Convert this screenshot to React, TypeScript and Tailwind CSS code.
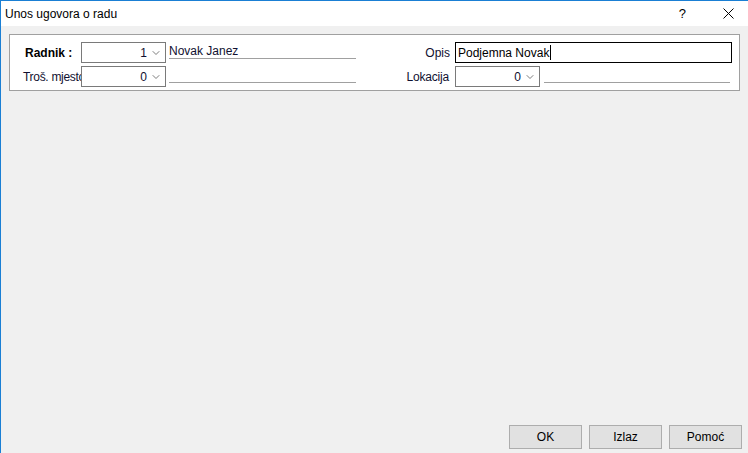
import { ChevronDown } from 'lucide-react'

const font = { fontFamily: '"Liberation Sans", Arial, sans-serif' }

function Combo({ value }: { value: string }) {
  return (
    <div className="relative z-10 flex h-[21px] w-[85px] shrink-0 items-center justify-end border border-[#7a7a7a] bg-white pr-[3px] text-[12px] text-[#101030]">
      <span className="mr-[3px]">{value}</span>
      <ChevronDown size={12} strokeWidth={1.6} className="text-[#5a5a5a]" />
    </div>
  )
}

function LineField({ text, width }: { text?: string; width: string }) {
  return (
    <div className={`h-[17px] ${width} shrink-0 self-start border-b border-[#a0a0a0] pt-[2px] text-[12px] leading-[14px] text-[#101030]`}>
      {text}
    </div>
  )
}

function DialogButton({ label }: { label: string }) {
  return (
    <button className="h-[24px] w-[73px] border border-[#adadad] bg-[#e1e1e1] text-[12px] text-black">
      {label}
    </button>
  )
}

export default function App() {
  return (
    <div className="flex h-[453px] w-[748px] flex-col overflow-hidden border-l border-[#1a7fd4] bg-[#f0f0f0]" style={font}>
      {/* Title bar */}
      <div className="flex h-[26px] shrink-0 items-center border-t border-[#1a7fd4] bg-white">
        <span className="ml-[4px] text-[12px] text-black">Unos ugovora o radu</span>
        <span className="ml-auto mr-[37px] text-[13px] text-black">?</span>
        <svg width="11" height="11" viewBox="0 0 11 11" className="mr-[14px]">
          <path d="M0.5 0.5 L10.5 10.5 M10.5 0.5 L0.5 10.5" stroke="#000" strokeWidth="1" />
        </svg>
      </div>

      {/* Header group */}
      <div className="ml-[8px] mt-[8px] flex w-[731px] flex-col gap-[3px] border border-[#a0a0a0] bg-white pb-[3px] pt-[7px]">
        <div className="flex h-[21px] items-center">
          <div className="ml-[15px] w-[56px] shrink-0 text-[12px] font-bold text-black">Radnik :</div>
          <Combo value="1" />
          <div className="ml-[3px]" />
          <LineField text="Novak Janez" width="w-[187px]" />
          <div className="w-[94px] shrink-0 text-right text-[12px] text-[#101030]">Opis</div>
          <div className="ml-[5px] flex h-[21px] w-[277px] items-center border border-black bg-white pl-[2px] text-[12px] text-black">
            Podjemna Novak<span className="ml-[1px] inline-block h-[15px] w-[1px] bg-black" />
          </div>
        </div>
        <div className="flex h-[21px] items-center">
          <div className="ml-[13px] w-[58px] shrink-0 whitespace-nowrap text-[12px] tracking-[-0.3px] text-[#101030]">Troš. mjesto</div>
          <Combo value="0" />
          <div className="ml-[3px]" />
          <LineField width="w-[187px]" />
          <div className="w-[93px] shrink-0 text-right text-[12px] tracking-[-0.2px] text-[#101030]">Lokacija</div>
          <div className="ml-[6px]">
            <Combo value="0" />
          </div>
          <div className="ml-[4px]" />
          <LineField width="w-[186px]" />
        </div>
      </div>

      <div className="flex-1" />

      {/* Buttons */}
      <div className="mb-[4px] flex justify-end gap-[7px] pr-[6px]">
        <DialogButton label="OK" />
        <DialogButton label="Izlaz" />
        <DialogButton label="Pomoć" />
      </div>
    </div>
  )
}
